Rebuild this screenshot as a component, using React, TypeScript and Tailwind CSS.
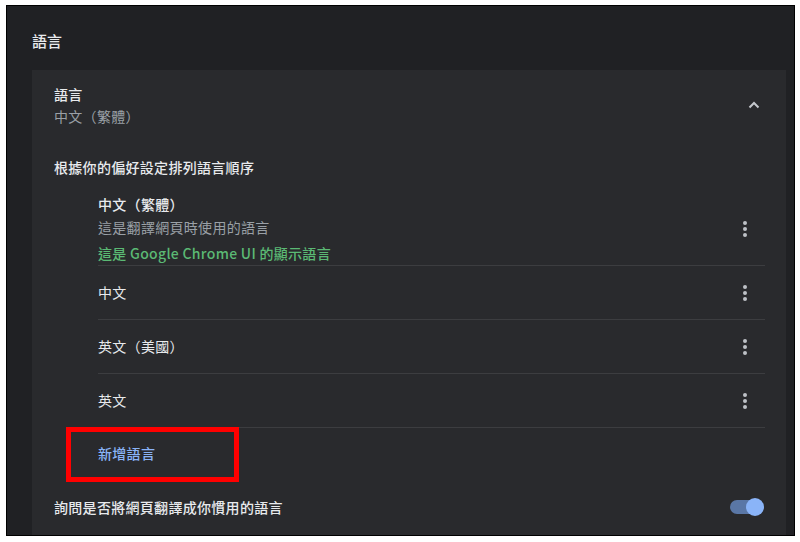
import React from 'react';

const font = { fontFamily: '"Noto Sans CJK TC", "Noto Sans", sans-serif' };

function Kebab() {
  return (
    <svg width="6" height="18" viewBox="0 0 6 18" className="text-[#bdc1c6]">
      <circle cx="3" cy="3" r="2" fill="currentColor" />
      <circle cx="3" cy="9" r="2" fill="currentColor" />
      <circle cx="3" cy="15" r="2" fill="currentColor" />
    </svg>
  );
}

function Chevron() {
  return (
    <svg width="14" height="10" viewBox="0 0 14 10">
      <path d="M2.5 7.5 L7 3 L11.5 7.5" fill="none" stroke="#c4c7cc" strokeWidth="2" />
    </svg>
  );
}

function LangRow({ label }: { label: string }) {
  return (
    <div className="h-[54px] flex items-center justify-between border-b border-[#3c3d40] pr-[17px]">
      <span className="text-[14px] tracking-[0.3px] text-[#e8eaed]">{label}</span>
      <Kebab />
    </div>
  );
}

export default function App() {
  const [on, setOn] = React.useState(true);

  return (
    <div className="w-[800px] h-[542px] bg-white overflow-hidden" style={font}>
      <div className="ml-[6px] mt-[5px] w-[789px] h-[531px] border border-black bg-[#202124] overflow-hidden">
        <div className="h-[64px] pt-[24px] pl-[25px] leading-[22px] text-[15px] font-medium text-[#e8eaed]">
          語言
        </div>
        <div className="ml-[25px] w-[754px] bg-[#292a2d] pl-[22px] pr-[21px]">
          {/* header */}
          <div className="pt-[13px] flex items-start justify-between">
            <div className="text-[14px] tracking-[0.3px] leading-[22px]">
              <div className="text-[#e8eaed] font-medium">語言</div>
              <div className="text-[#9aa0a6]">中文（繁體）</div>
            </div>
            <div className="mt-[17px] mr-[4px]">
              <Chevron />
            </div>
          </div>

          <div className="mt-[29px] text-[14px] tracking-[0.3px] leading-[22px] font-medium text-[#e8eaed]">
            根據你的偏好設定排列語言順序
          </div>

          <div className="ml-[44px] mt-[15px]">
            <div className="flex items-center justify-between border-b border-[#3c3d40] pr-[17px] pb-[1px]">
              <div className="text-[14px] tracking-[0.3px] leading-[22px]">
                <div className="text-[#e8eaed] font-medium">中文（繁體）</div>
                <div className="mt-[1px] text-[#9aa0a6]">這是翻譯網頁時使用的語言</div>
                <div className="mt-[4px] text-[#5bb974] font-medium">這是 Google Chrome UI 的顯示語言</div>
              </div>
              <Kebab />
            </div>
            <LangRow label="中文" />
            <LangRow label="英文（美國）" />
            <LangRow label="英文" />

            <div className="relative h-[50px] flex items-center">
              <span className="text-[14px] tracking-[0.3px] text-[#8ab4f8] font-medium">新增語言</span>
              <div className="absolute left-[-32px] top-[-1px] w-[173px] h-[55px] border-[5px] border-[#ff0000]" />
            </div>
          </div>

          <div className="mt-[18px] h-[22px] flex items-center justify-between">
            <span className="text-[14px] tracking-[0.3px] leading-[22px] text-[#e8eaed] font-medium">
              詢問是否將網頁翻譯成你慣用的語言
            </span>
            <button
              onClick={() => setOn(!on)}
              className="relative w-[34px] h-[18px] mr-[1px] flex items-center"
            >
              <span className={`block w-[30px] h-[14px] rounded-full ${on ? 'bg-[#5a77a6]' : 'bg-[#5f6368]'}`} />
              <span
                className={`absolute top-0 w-[18px] h-[18px] rounded-full ${on ? 'left-[16px] bg-[#8ab4f8]' : 'left-0 bg-[#bdc1c6]'}`}
              />
            </button>
          </div>
          <div className="h-[30px]" />
        </div>
      </div>
    </div>
  );
}
